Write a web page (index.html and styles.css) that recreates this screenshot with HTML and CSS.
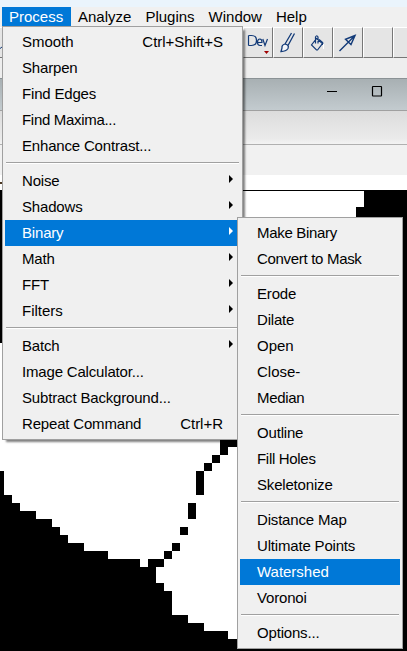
FILE: index.html
```
<!DOCTYPE html>
<html lang="en">
<head>
<meta charset="utf-8">
<title>ImageJ</title>
<link rel="stylesheet" href="styles.css">
</head>
<body>
<div class="screen">
  <div class="titlebar"></div>
  <nav class="menubar"><span class="active">Process</span><span>Analyze</span><span>Plugins</span><span>Window</span><span>Help</span></nav>
  <div class="toolbar">
    <div class="tool"><svg width="29" height="29" viewBox="0 0 29 29"><path d="M25 22l4-3" fill="none" stroke="#123a78"/></svg></div>
    <div class="tool"></div><div class="tool"></div><div class="tool"></div><div class="tool"></div><div class="tool"></div><div class="tool"></div><div class="tool"></div><div class="tool"></div>
    <div class="tool"><svg width="28" height="29" viewBox="1 0 28 29"><path d="M5.500 7.500v10M5.500 7.500h3q5 0 5 5t-5 5h-3M14.500 14.500h4.500q0-3.500-2.200-3.500t-2.300 3.300q0 3.200 2.500 3.200h2M19.800 11l2.200 6.500 2.500-6.500" fill="none" stroke="#123a78" stroke-width="1.200"/><path d="M21 23h5l-2.500 3z" fill="#a00000"/></svg></div>
    <div class="tool"><svg width="28" height="29" viewBox="1 0 28 29"><path d="M18.500 5l-6.500 11M21.500 5.500l-6.500 12M12 16q-3.500 1-3 4l-1 3.500q5 0 7-3 1-2-.5-3.500z" fill="#f4f6fa" stroke="#123a78" stroke-width="1.300"/></svg></div>
    <div class="tool"><svg width="28" height="29" viewBox="1 0 28 29"><path d="M13.500 10.500l6 5-5 6.500h-1L8.500 17zM12.500 15.500V9q1.300-2.500 2.500 0v6.500" fill="none" stroke="#123a78" stroke-width="1.200"/><path d="M16 11.500l3.500 3v2.500" fill="none" stroke="#123a78" stroke-width="1.500"/><path d="M20.500 16v5" stroke="#fff"/></svg></div>
    <div class="tool"><svg width="28" height="29" viewBox="1 0 28 29"><path d="M6.500 23l9.500-9.500M22 7.500l-9.500 3.800 5.500 5.200zM22 7.500l-6 6" fill="none" stroke="#123a78" stroke-width="1.400"/></svg></div>
    <div class="tool"></div><div class="tool"></div>
  </div>
  <div class="gap"></div>
  <div class="window-title"><svg width="70" height="20" viewBox="0 0 70 20"><path d="M7 9.500h10M52.500 5q0-.5.500-.5h8q.5 0 .5.500v8.500q0 .5-.5.500h-8q-.5 0-.5-.5z" fill="none" stroke="#000" stroke-width="1.200"/></svg></div>
  <div class="window-band"></div>
  <div class="window-info"></div>
  <div class="window-white"></div>
  <svg class="canvas" width="407" height="461" viewBox="0 190 407 461" shape-rendering="crispEdges">
    <path d="M0 190h407v1H0zM364 190h43v461H356V207h8z"/>
    <path d="M0 471h4v24h8v8h8v8h16v8h16v8h8v8h8v8h16v8h24v8h32v8h8v-8h16v8h-8v16h8v8h8v24h16v8h16v8h24v8h130v12H0z"/>
    <path d="M0 190h3v153H0zM220 440h20v7h-12v8h-8zM212 455h8v8h-8zM204 463h8v8h-8zM196 471h8v24h-8zM188 503h8v16h-8zM180 527h8v8h-8zM172 543h8v8h-8zM164 551h8v8h-8z"/>
  </svg>
  <div class="menu main">
    <div class="item wide"><span>Smooth</span><span>Ctrl+Shift+S</span></div>
    <div class="item">Sharpen</div>
    <div class="item">Find Edges</div>
    <div class="item tight">Find Maxima...</div>
    <div class="item">Enhance Contrast...</div>
    <div class="sep"></div>
    <div class="item sub">Noise</div>
    <div class="item sub">Shadows</div>
    <div class="item sub selected">Binary</div>
    <div class="item sub">Math</div>
    <div class="item sub">FFT</div>
    <div class="item sub wide">Filters</div>
    <div class="sep"></div>
    <div class="item sub">Batch</div>
    <div class="item">Image Calculator...</div>
    <div class="item">Subtract Background...</div>
    <div class="item"><span>Repeat Command</span><span class="wide">Ctrl+R</span></div>
  </div>
  <div class="menu binary">
    <div class="item tight">Make Binary</div>
    <div class="item tight">Convert to Mask</div>
    <div class="sep"></div>
    <div class="item">Erode</div>
    <div class="item">Dilate</div>
    <div class="item wide">Open</div>
    <div class="item wide">Close-</div>
    <div class="item tight">Median</div>
    <div class="sep"></div>
    <div class="item">Outline</div>
    <div class="item tight">Fill Holes</div>
    <div class="item">Skeletonize</div>
    <div class="sep"></div>
    <div class="item">Distance Map</div>
    <div class="item">Ultimate Points</div>
    <div class="item selected wide">Watershed</div>
    <div class="item">Voronoi</div>
    <div class="sep"></div>
    <div class="item">Options...</div>
  </div>
</div>
</body>
</html>
```

FILE: styles.css
```
* { box-sizing: border-box; }
body { margin: 0; }
.screen {
  position: relative;
  width: 407px;
  height: 651px;
  overflow: hidden;
  background: #fff;
  color: #000;
  font: 15px/20px "Liberation Sans", Arial, sans-serif;
}
.titlebar { height: 7px; background: #eaf4fc; }
.menubar { display: flex; height: 20px; padding-left: 2px; background: #f0f0f0; }
.menubar span { padding: 0 7px; white-space: nowrap; }
.menubar .active { width: 69px; background: #0078d7; color: #fff; }
.toolbar { display: flex; height: 31px; margin-left: -28px; background: #eee; }
.tool {
  flex: 0 0 30px;
  height: 31px;
  background: #e5e5e5;
  border: 1px solid #fff;
  border-right-color: #777;
  border-bottom-color: #777;
}
.tool svg { display: block; }
.gap { height: 20px; background: #eee; }
.window-title {
  height: 33px;
  padding: 3px 0 0 320px;
  background: linear-gradient(#a8b0b3, #c3cbcf);
  border-top: 1px solid #8b9295;
  border-bottom: 1px solid #a0a0a0;
}
.window-title svg { display: block; }
.window-band { height: 34px; background: linear-gradient(#dcdcdc, #ebebeb 85%, #f3f3f3); border-bottom: 1px solid #b0b0b0; }
.window-info { height: 30px; background: #f1f1f1; }
.window-white { height: 15px; padding-top: 7px; background: #fff; }
.window-white::before { content: ""; display: block; width: 2px; height: 2px; background: #4a3520; }
.canvas { display: block; }
.menu { position: absolute; background: #f0f0f0; border: 1px solid #a0a0a0; padding: 2px; }
.main { left: 2px; top: 26px; width: 241px; height: 414px; box-shadow: 3px 3px 2px -1px rgba(0,0,0,.5); }
.binary { left: 237px; top: 217px; width: 166px; height: 432px; }
.item {
  display: flex;
  justify-content: space-between;
  align-items: center;
  height: 26px;
  padding: 0 17px;
  white-space: nowrap;
  letter-spacing: -0.18px;
}
.wide { letter-spacing: -0.02px; }
.tight { letter-spacing: -0.31px; }
.sub::after { content: ""; border: 4px solid transparent; border-left-color: currentColor; border-right: 0; margin: -4px -10px 0 0; }
.selected { background: #0078d7; color: #fff; }
.sep { height: 9px; padding-top: 3px; margin: 0 1px; }
.sep::before { content: ""; display: block; height: 1px; background: #a0a0a0; border-bottom: 1px solid #fff; }
```
